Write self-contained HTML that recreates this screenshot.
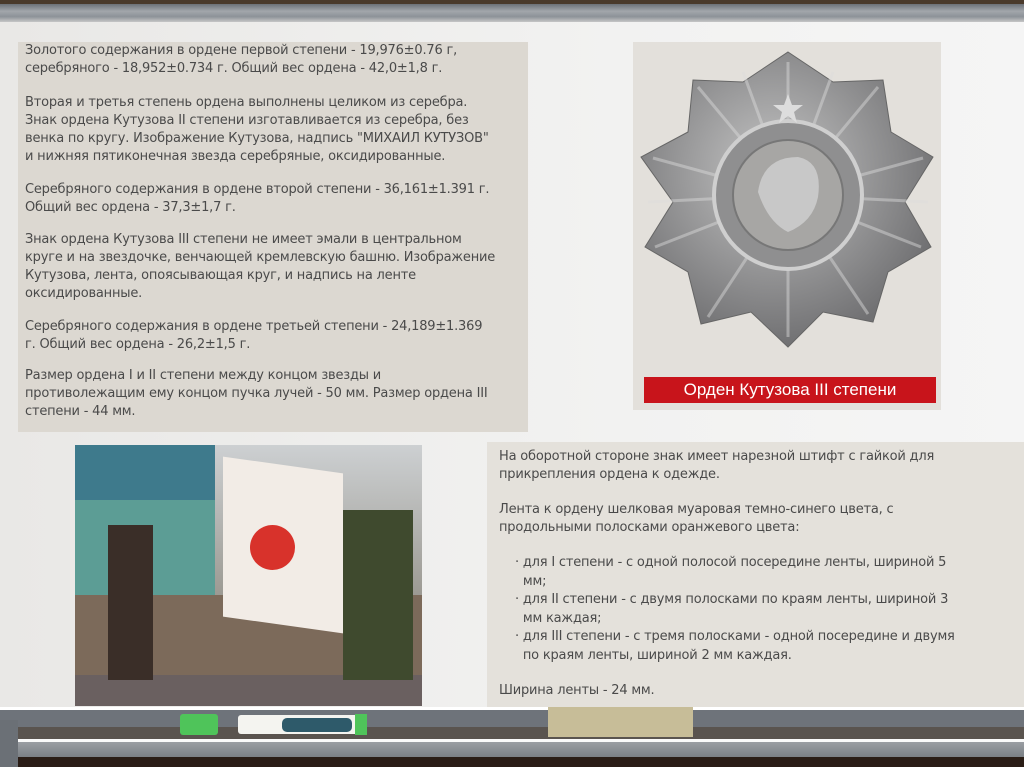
<!DOCTYPE html>
<html><head><meta charset="utf-8"><style>
*{margin:0;padding:0;box-sizing:border-box}
body{width:1024px;height:767px;overflow:hidden;position:relative;background:#ecebe9;font-family:Tahoma,"DejaVu Sans","Liberation Sans",sans-serif;color:#4a4a4a}
.a{position:absolute}
.t{font-size:13px;line-height:18px;white-space:nowrap;letter-spacing:-0.2px}
</style></head><body>
<div class="a" style="left:0;top:0;width:1024px;height:4px;background:#4a3a2c"></div>
<div class="a" style="left:0;top:4px;width:1024px;height:18px;background:linear-gradient(#6c7178,#a2a6ab 40%,#8d9298 70%,#c6c6c6)"></div>
<div class="a" style="left:0;top:22px;width:1024px;height:686px;background:linear-gradient(90deg,#e9e8e6,#f2f2f1 60%,#f5f5f5)"></div>

<div class="a" style="left:18px;top:42px;width:510px;height:390px;background:#dcd8d1"></div>
<div class="a t" style="left:25px;top:42px">Золотого содержания в ордене первой степени - 19,976±0.76 г,<br>серебряного - 18,952±0.734 г. Общий вес ордена - 42,0±1,8 г.</div>
<div class="a t" style="left:25px;top:94px">Вторая и третья степень ордена выполнены целиком из серебра.<br>Знак ордена Кутузова II степени изготавливается из серебра, без<br>венка по кругу. Изображение Кутузова, надпись "МИХАИЛ КУТУЗОВ"<br>и нижняя пятиконечная звезда серебряные, оксидированные.</div>
<div class="a t" style="left:25px;top:181px">Серебряного содержания в ордене второй степени - 36,161±1.391 г.<br>Общий вес ордена - 37,3±1,7 г.</div>
<div class="a t" style="left:25px;top:231px">Знак ордена Кутузова III степени не имеет эмали в центральном<br>круге и на звездочке, венчающей кремлевскую башню. Изображение<br>Кутузова, лента, опоясывающая круг, и надпись на ленте<br>оксидированные.</div>
<div class="a t" style="left:25px;top:318px">Серебряного содержания в ордене третьей степени - 24,189±1.369<br>г. Общий вес ордена - 26,2±1,5 г.</div>
<div class="a t" style="left:25px;top:367px">Размер ордена I и II степени между концом звезды и<br>противолежащим ему концом пучка лучей - 50 мм. Размер ордена III<br>степени - 44 мм.</div>

<div class="a" style="left:633px;top:42px;width:308px;height:368px;background:#e3e0db"></div>
<svg class="a" style="left:633px;top:42px" width="308" height="330" viewBox="0 0 308 330">
<defs><radialGradient id="g" cx="45%" cy="40%" r="60%"><stop offset="0" stop-color="#c4c4c4"/><stop offset="1" stop-color="#707072"/></radialGradient></defs>
<polygon fill="url(#g)" stroke="#666" points="155,10 200,40 250,38 258,90 300,115 272,160 298,205 255,230 240,280 190,270 155,305 118,270 68,282 55,230 12,205 40,160 8,115 55,90 60,38 110,40"/>
<g stroke="#ddd" stroke-width="3" opacity="0.45">
<line x1="155" y1="153" x2="155" y2="20"/><line x1="155" y1="153" x2="290" y2="116"/><line x1="155" y1="153" x2="20" y2="116"/><line x1="155" y1="153" x2="245" y2="45"/><line x1="155" y1="153" x2="65" y2="45"/><line x1="155" y1="153" x2="288" y2="205"/><line x1="155" y1="153" x2="22" y2="205"/><line x1="155" y1="153" x2="235" y2="272"/><line x1="155" y1="153" x2="75" y2="275"/><line x1="155" y1="153" x2="155" y2="295"/><line x1="155" y1="153" x2="295" y2="160"/><line x1="155" y1="153" x2="15" y2="160"/><line x1="155" y1="153" x2="200" y2="30"/><line x1="155" y1="153" x2="110" y2="30"/></g>
<circle cx="155" cy="153" r="74" fill="#8f8f90" stroke="#cfcfcf" stroke-width="4"/>
<circle cx="155" cy="153" r="55" fill="#a7a6a4" stroke="#777" stroke-width="2"/>
<path d="M125,150 q5,-35 40,-35 q25,5 20,40 q-5,25 -30,35 q-20,-10 -30,-40z" fill="#c8c8c8"/>
<polygon fill="#ddd" points="155,52 159,63 170,63 161,70 164,81 155,74 146,81 149,70 140,63 151,63"/>
</svg>
<div class="a" style="left:644px;top:377px;width:292px;height:26px;background:#c8141b;color:#fff;font-size:17px;line-height:26px;text-align:center;font-family:'Liberation Sans',sans-serif">Орден Кутузова III степени</div>

<div class="a" style="left:75px;top:445px;width:347px;height:261px;background:#8a7a6c;overflow:hidden">
<div class="a" style="left:0;top:0;width:140px;height:55px;background:#3e7a8c"></div>
<div class="a" style="left:0;top:55px;width:140px;height:100px;background:#5c9d95"></div>
<div class="a" style="left:140px;top:0;width:207px;height:150px;background:linear-gradient(#cdd0d2,#9c9a93)"></div>
<div class="a" style="left:0;top:150px;width:347px;height:111px;background:#7c6a5a"></div>
<div class="a" style="left:0;top:230px;width:347px;height:31px;background:#6a6060"></div>
<div class="a" style="left:33px;top:80px;width:45px;height:155px;background:#3a2e28"></div>
<div class="a" style="left:148px;top:20px;width:120px;height:160px;background:#f2ece6;transform:skewY(8deg)"></div>
<div class="a" style="left:175px;top:80px;width:45px;height:45px;border-radius:50%;background:#d8322b"></div>
<div class="a" style="left:268px;top:65px;width:70px;height:170px;background:#3f4a2e"></div>
</div>

<div class="a" style="left:487px;top:442px;width:537px;height:265px;background:#e4e1db"></div>
<div class="a t" style="left:499px;top:448px">На оборотной стороне знак имеет нарезной штифт с гайкой для<br>прикрепления ордена к одежде.</div>
<div class="a t" style="left:499px;top:501px">Лента к ордену шелковая муаровая темно-синего цвета, с<br>продольными полосками оранжевого цвета:</div>
<div class="a t" style="left:515px;top:554px;line-height:18.5px">· для I степени - с одной полосой посередине ленты, шириной 5<br>&nbsp;&nbsp;мм;<br>· для II степени - с двумя полосками по краям ленты, шириной 3<br>&nbsp;&nbsp;мм каждая;<br>· для III степени - с тремя полосками - одной посередине и двумя<br>&nbsp;&nbsp;по краям ленты, шириной 2 мм каждая.</div>
<div class="a t" style="left:499px;top:682px">Ширина ленты - 24 мм.</div>

<div class="a" style="left:0;top:707px;width:1024px;height:3px;background:#fff"></div>
<div class="a" style="left:0;top:710px;width:1024px;height:17px;background:#6e737a"></div>
<div class="a" style="left:0;top:727px;width:1024px;height:12px;background:#5a544f"></div>
<div class="a" style="left:0;top:739px;width:1024px;height:3px;background:#fafafa"></div>
<div class="a" style="left:0;top:742px;width:1024px;height:15px;background:linear-gradient(#9a9ea3,#7b8085)"></div>
<div class="a" style="left:0;top:757px;width:1024px;height:10px;background:#2a1d16"></div>
<div class="a" style="left:0;top:720px;width:18px;height:47px;background:#6b7076"></div>
<div class="a" style="left:180px;top:714px;width:38px;height:21px;background:#4fc45a;border-radius:3px"></div>
<div class="a" style="left:238px;top:715px;width:128px;height:19px;background:#f4f4f0;border-radius:3px"></div>
<div class="a" style="left:282px;top:718px;width:70px;height:14px;background:#2e5a6a;border-radius:5px"></div>
<div class="a" style="left:355px;top:714px;width:12px;height:21px;background:#4fc45a"></div>
<div class="a" style="left:548px;top:707px;width:145px;height:30px;background:#c7bd98"></div>
</body></html>
